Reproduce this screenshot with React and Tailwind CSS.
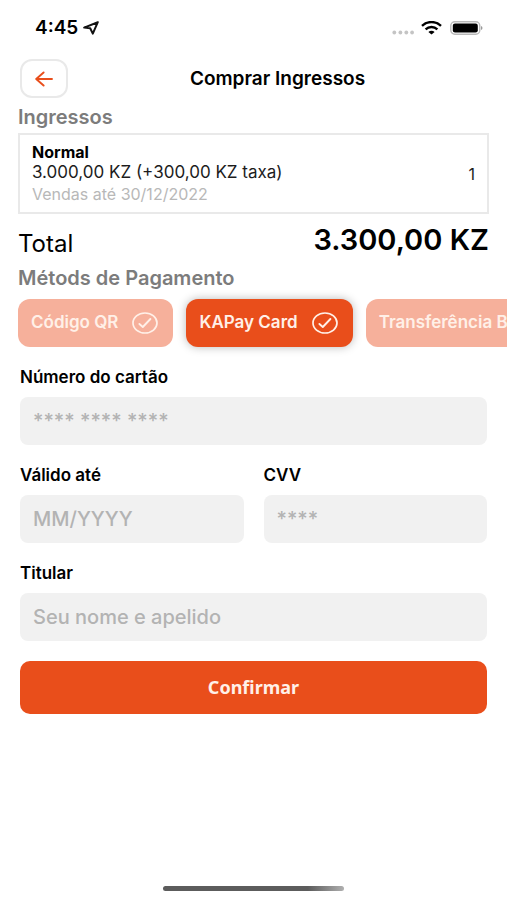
const methods = [
  { name: "Código QR", selected: false },
  { name: "KAPay Card", selected: true },
  { name: "Transferência Bancária", selected: false },
];

function StatusBar() {
  return (
    <header className="flex h-[55px] items-center justify-between pl-[35px] pr-6">
      <div className="flex items-center gap-[5px]">
        <span className="text-[19px] leading-6 font-semibold">4:45</span>
        <svg className="h-[14px] w-4" viewBox="0 0 16 14" fill="none" stroke="#111" strokeWidth="2" strokeLinejoin="round" aria-hidden="true">
          <path d="M14.8 1.2 1.2 6.6l6 .7 2.6 5.3Z" />
        </svg>
      </div>
      <div className="flex items-center gap-[7px]">
        <svg className="h-[14px] w-[23px]" viewBox="0 0 23 14" fill="#c4c4c4" aria-hidden="true">
          <circle cx="3.3" cy="11.5" r="1.9" />
          <circle cx="9.4" cy="11.5" r="1.9" />
          <circle cx="15.3" cy="11.5" r="1.9" />
          <circle cx="21.1" cy="11.5" r="1.9" />
        </svg>
        <svg className="h-[14px] w-[21px]" viewBox="0 0 21 14" fill="none" stroke="#000" strokeWidth="2.4" aria-hidden="true">
          <path d="M1 4.8c5.4-5 13.6-5 19 0" />
          <path d="M4.6 8.4c3.4-3.2 8.4-3.2 11.8 0" />
          <path d="M7.4 10.9c1.8-1.7 4.4-1.7 6.2 0l-3.1 2.6Z" fill="#000" stroke="none" />
        </svg>
        <svg className="h-[14px] w-[34px]" viewBox="0 0 34 14" aria-hidden="true">
          <rect x="1.8" y="0.8" width="29" height="12.4" rx="4" fill="#fff" stroke="#b9b9b9" strokeWidth="1.4" />
          <rect x="3.8" y="2.6" width="25" height="8.8" rx="2.2" fill="#000" />
          <path d="M32 5v4c2-.8 2-3.2 0-4Z" fill="#9a9a9a" />
        </svg>
      </div>
    </header>
  );
}

function CheckIcon() {
  return (
    <svg className="h-[22px] w-[26px] shrink-0" viewBox="0 0 26 22" fill="none" stroke="currentColor" strokeLinecap="round" strokeLinejoin="round" aria-hidden="true">
      <ellipse cx="13" cy="11" rx="12" ry="10" strokeWidth="1.7" />
      <path d="m7.4 12 3.4 3 7.6-8" strokeWidth="1.9" />
    </svg>
  );
}

function Field({ id, label, placeholder }) {
  return (
    <div className="flex min-w-0 flex-1 flex-col gap-2">
      <label htmlFor={id} className="text-[17px] leading-6 font-semibold">{label}</label>
      <input
        id={id}
        type="text"
        placeholder={placeholder}
        className="h-12 w-full rounded-lg bg-[#f1f1f1] px-[13px] text-[20px] font-medium text-black outline-none placeholder:text-[#b3b3b3]"
      />
    </div>
  );
}

export default function App() {
  return (
    <div className="flex min-h-screen flex-col overflow-x-hidden bg-white font-['Inter',sans-serif] text-black">
      <StatusBar />
      <main className="flex flex-1 flex-col">
        <div className="grid grid-cols-[48px_1fr] items-center px-5 pt-1">
          <button type="button" aria-label="Voltar" className="flex h-[39px] w-12 items-center justify-center rounded-xl border-2 border-[#e9e9e9] text-[#e94e1b]">
            <svg className="h-4 w-[18px]" viewBox="0 0 18 16" fill="none" stroke="currentColor" strokeWidth="1.9" strokeLinecap="round" strokeLinejoin="round" aria-hidden="true">
              <path d="M17 8H1.2M8.6 1.5 1.2 8l7.4 6.5" />
            </svg>
          </button>
          <h1 className="text-center text-[19px] leading-6 font-semibold">Comprar Ingressos</h1>
        </div>

        <section className="px-[18px] pt-[7px]">
          <h2 className="text-[20px] leading-6 font-semibold text-[#7c7c7c]">Ingressos</h2>
          <div className="mt-1 flex h-[81px] items-center justify-between border-2 border-[#e9e9e9] px-3">
            <div>
              <p className="text-[16px] leading-5 font-bold">Normal</p>
              <p className="text-[17px] leading-5 text-[#1c1c1c]">3.000,00 KZ (+300,00 KZ taxa)</p>
              <p className="text-[16px] leading-6 text-[#b8b8b8]">Vendas até 30/12/2022</p>
            </div>
            <span className="text-[16px] leading-5 text-[#1c1c1c]">1</span>
          </div>
          <div className="flex h-[52px] items-center justify-between">
            <span className="pt-2 text-[24px] leading-8">Total</span>
            <strong className="text-[29px] leading-8 font-semibold">3.300,00 KZ</strong>
          </div>
        </section>

        <section>
          <h2 className="px-[18px] text-[20px] leading-6 font-semibold text-[#7c7c7c]">Métods de Pagamento</h2>
          <div className="flex gap-[13px] overflow-hidden px-[18px] pt-[9px] pb-[18px]">
            {methods.map((method) => (
              <button
                key={method.name}
                type="button"
                aria-pressed={method.selected}
                className={
                  method.selected
                    ? "flex h-12 shrink-0 items-center gap-[14px] rounded-xl bg-[#e94e1b] px-[13px] pr-[15px] text-[17px] font-semibold whitespace-nowrap text-[#fff0e8] shadow-[0_0_10px_rgba(0,0,0,0.28)]"
                    : "flex h-12 shrink-0 items-center gap-[14px] rounded-xl bg-[#f6b09b] px-[13px] pr-[15px] text-[17px] font-semibold whitespace-nowrap text-[#fff0e8]"
                }
              >
                {method.name}
                <CheckIcon />
              </button>
            ))}
          </div>
        </section>

        <form className="flex flex-col gap-[18px] px-5" onSubmit={(event) => event.preventDefault()}>
          <Field id="numero" label="Número do cartão" placeholder="**** **** ****" />
          <div className="flex gap-5">
            <Field id="validade" label="Válido até" placeholder="MM/YYYY" />
            <Field id="cvv" label="CVV" placeholder="****" />
          </div>
          <Field id="titular" label="Titular" placeholder="Seu nome e apelido" />
          <button type="submit" className="mt-[2px] h-[53px] rounded-[10px] bg-[#e94e1b] font-['Noto_Sans',sans-serif] text-[18px] font-bold text-[#fff0e8]">
            Confirmar
          </button>
        </form>
      </main>
      <footer className="flex justify-center pb-[9px]">
        <div className="h-[5px] w-[181px] rounded-full bg-linear-to-r from-[#5c5c5c] from-80% to-[#b0b0b0]" />
      </footer>
    </div>
  );
}
